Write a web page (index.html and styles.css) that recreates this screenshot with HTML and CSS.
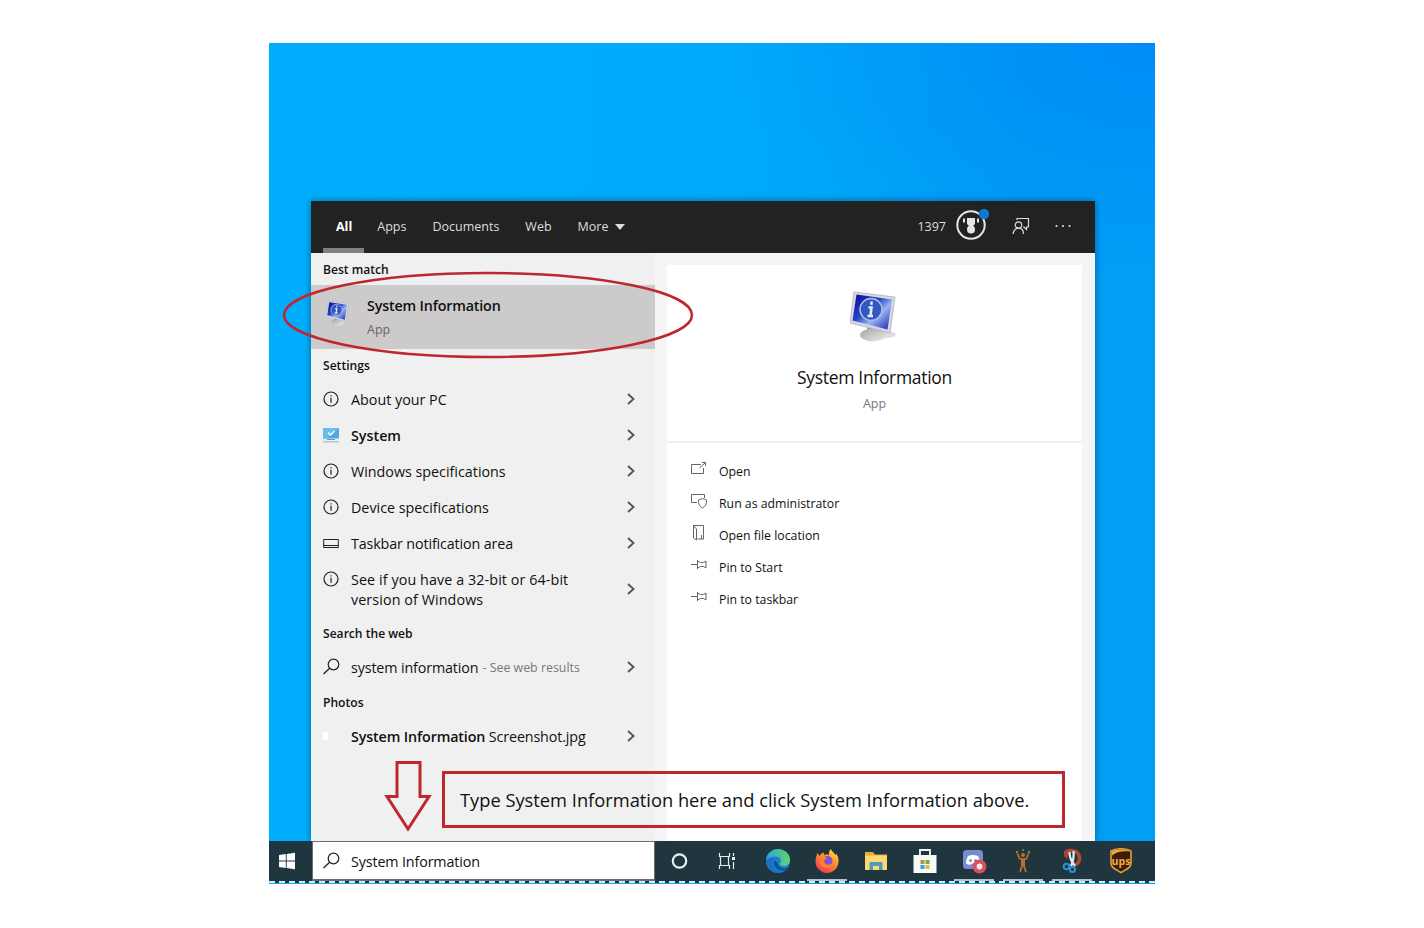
FILE: index.html
```html
<!DOCTYPE html>
<html>
<head>
<meta charset="UTF-8">
<title>System Information</title>
<link rel="stylesheet" href="styles.css">
</head>
<body>
<svg class="defs" width="0" height="0">
	<defs>
		<linearGradient id="screen" x1="0" y1="0" x2="1" y2="1">
			<stop offset="0" stop-color="#0a0a9c"/><stop offset=".4" stop-color="#2444c4"/><stop offset=".62" stop-color="#9ab4f2"/><stop offset="1" stop-color="#1420b0"/>
		</linearGradient>
		<linearGradient id="stand" x1="0" y1="0" x2="1" y2="1">
			<stop offset="0" stop-color="#a4a4a6"/><stop offset="1" stop-color="#ededed"/>
		</linearGradient>
		<linearGradient id="edgeTop" x1="0" y1="0" x2="1" y2="0">
			<stop offset="0" stop-color="#2aa5dc"/><stop offset="1" stop-color="#62d46a"/>
		</linearGradient>
		<linearGradient id="fox" x1=".8" y1="0" x2=".2" y2="1">
			<stop offset="0" stop-color="#ffe04a"/><stop offset=".45" stop-color="#ff8a2c"/><stop offset="1" stop-color="#f0305c"/>
		</linearGradient>
	</defs>
	<symbol id="monitor" viewBox="0 0 48 52">
		<ellipse cx="36" cy="43.500" rx="10" ry="3.500" fill="#cfcfd1" opacity=".7"/>
		<path d="M17 36l13 3v5H18z" fill="#8b8b90"/>
		<ellipse cx="23" cy="44" rx="13" ry="6.500" fill="url(#stand)"/>
		<path d="M4 1l41 5-5 36L0 32z" fill="#d5d7e4" stroke="#aeb0bf" stroke-width=".8"/>
		<path d="M6.500 3.500l35.500 5-4.500 30L2.500 29.500z" fill="url(#screen)"/>
		<circle cx="21" cy="18.500" r="11" fill="#3457bf" stroke="#a9bdec" stroke-width="1.500"/>
		<path d="M21.500 10.500v3.200M18.500 16.500h3l-1 8M17.500 25h5.500" stroke="#e2e9fb" stroke-width="2.600" fill="none"/>
	</symbol>
	<symbol id="info" viewBox="0 0 16 16">
		<circle cx="8" cy="8" r="7" fill="none" stroke="#222" stroke-width="1.200"/>
		<path d="M8 6.700v5M8 4.300v1.300" stroke="#222" stroke-width="1.200"/>
	</symbol>
	<symbol id="arrow" viewBox="0 0 10 14">
		<path d="M2 2l5.500 5L2 12" fill="none" stroke="#555" stroke-width="1.900"/>
	</symbol>
	<symbol id="search" viewBox="0 0 18 18">
		<circle cx="10.500" cy="6.500" r="5.300" fill="none" stroke="#222" stroke-width="1.200"/>
		<path d="M6.700 10.200L.5 16" stroke="#222" stroke-width="1.300"/>
	</symbol>
	<symbol id="pin" viewBox="0 0 18 18">
		<path d="M1 8.500h6M7.500 4v9M7.500 5l3 1.500h3L16 5v7l-2.500-1.500h-3l-3 1.500" fill="none" stroke="#666"/>
	</symbol>
</svg>

<div class="desktop">
	<div class="window">
		<div class="header">
			<div class="tab active"><span>All</span></div>
			<div class="tab"><span>Apps</span></div>
			<div class="tab"><span>Documents</span></div>
			<div class="tab"><span>Web</span></div>
			<div class="tab"><span>More</span><i class="caret"></i></div>
			<div class="tools">
				<span class="points">1397</span>
				<svg class="medal" width="34" height="34" viewBox="0 0 34 34">
					<circle cx="16" cy="18" r="13.700" fill="none" stroke="#e6e6e6" stroke-width="2"/>
					<path d="M12 11h8v6l-2 2h-4l-2-2z" fill="#e6e6e6"/>
					<path d="M9 11.500v4M23 11.500v4" stroke="#e6e6e6" stroke-width="2"/>
					<circle cx="16" cy="22.500" r="4" fill="#e6e6e6"/>
					<circle cx="29" cy="7" r="5.200" fill="#0f78d4"/>
				</svg>
				<svg class="feedback" width="18" height="18" viewBox="0 0 18 18" fill="none" stroke="#ddd" stroke-width="1.200">
					<path d="M5 3V1.500h11.500v8.500h-2v2.500L12 10h-1"/>
					<circle cx="6.500" cy="8" r="3.200"/>
					<path d="M1.200 17c0-3.500 2.300-5.800 5.300-5.800s5 2.300 5 5.800"/>
				</svg>
				<svg width="16" height="4" viewBox="0 0 16 4" fill="#ddd"><circle cx="1.500" cy="2" r="1.100"/><circle cx="8" cy="2" r="1.100"/><circle cx="14.500" cy="2" r="1.100"/></svg>
			</div>
		</div>
		<div class="body">
			<div class="results">
				<h3>Best match</h3>
				<div class="best">
					<svg width="24" height="27"><use href="#monitor"/></svg>
					<div>
						<b class="best-name">System Information</b>
						<p>App</p>
					</div>
				</div>
				<h3>Settings</h3>
				<div class="row"><svg class="icon" width="16" height="16"><use href="#info"/></svg><span class="label">About your PC</span><svg class="arrow"><use href="#arrow"/></svg></div>
				<div class="row">
					<svg class="icon" width="16" height="16" viewBox="0 0 16 16">
						<path d="M0 1h16v10.500H0z" fill="#4fa9dc"/><path d="M0 1h16L4 11.500H0z" fill="#6cbce6"/>
						<path d="M5 5.500l2.500 2.500L11.500 4" fill="none" stroke="#fff" stroke-width="1.300"/>
						<path d="M4 12.500h8" stroke="#4f9fc8"/><path d="M0 14.800h16" stroke="#86b9d4"/>
					</svg>
					<b class="label">System</b><svg class="arrow"><use href="#arrow"/></svg>
				</div>
				<div class="row"><svg class="icon" width="16" height="16"><use href="#info"/></svg><span class="label">Windows specifications</span><svg class="arrow"><use href="#arrow"/></svg></div>
				<div class="row"><svg class="icon" width="16" height="16"><use href="#info"/></svg><span class="label">Device specifications</span><svg class="arrow"><use href="#arrow"/></svg></div>
				<div class="row">
					<svg class="icon" width="16" height="16" viewBox="0 0 16 16"><path d="M.7 4.500h14.600v8H.7zM.7 10.500h14.600" fill="none" stroke="#222"/></svg>
					<span class="label narrow">Taskbar notification area</span><svg class="arrow"><use href="#arrow"/></svg>
				</div>
				<div class="row tall"><svg class="icon" width="16" height="16"><use href="#info"/></svg><span class="label wide">See if you have a 32-bit or 64-bit<br>version of Windows</span><svg class="arrow"><use href="#arrow"/></svg></div>
				<h3>Search the web</h3>
				<div class="row web"><svg class="icon" width="18" height="18"><use href="#search"/></svg><span class="label narrow">system information</span><small>- See web results</small><svg class="arrow"><use href="#arrow"/></svg></div>
				<h3>Photos</h3>
				<div class="row web">
					<svg class="icon" width="16" height="16" viewBox="0 0 16 16"><path d="M0 4h5v8H0z" fill="#fff"/><path d="M7 4.500h6M9 8h6M7 11h7" stroke="#f7f7f7"/></svg>
					<span class="label narrow"><b>System Information</b> Screenshot.jpg</span><svg class="arrow"><use href="#arrow"/></svg>
				</div>
			</div>
			<div class="preview">
				<div class="card">
					<div class="app">
						<svg width="48" height="52"><use href="#monitor"/></svg>
						<h2>System Information</h2>
						<p>App</p>
					</div>
					<div class="actions">
						<div class="action"><svg width="18" height="18" viewBox="0 0 18 18" fill="none" stroke="#666"><path d="M11 4.500H1.500v9h12V8M9.500 8l5.500-5M12 2.500h3.500V6"/></svg><span>Open</span></div>
						<div class="action"><svg width="18" height="18" viewBox="0 0 18 18" fill="none" stroke="#666"><path d="M7 10.500H1.500v-8h13V6M12.500 6.500l4 1.500c.3 4-1 6.500-4 8-3-1.500-4.300-4-4-8z"/></svg><span>Run as administrator</span></div>
						<div class="action"><svg width="18" height="18" viewBox="0 0 18 18" fill="none" stroke="#666"><path d="M3.500 1.500h10V15h-6M3.500 1.500V14l3 2V5L3.500 1.500M11.500 11v4"/></svg><span>Open file location</span></div>
						<div class="action"><svg width="18" height="18"><use href="#pin"/></svg><span>Pin to Start</span></div>
						<div class="action"><svg width="18" height="18"><use href="#pin"/></svg><span>Pin to taskbar</span></div>
					</div>
				</div>
			</div>
		</div>
	</div>

	<div class="taskbar">
		<div class="start">
			<svg width="18" height="18" viewBox="0 0 18 18" fill="#fff"><path d="M1 3l6.800-1v6.500H1zM8.700 1.900L17 .7v7.800H8.700zM1 9.400h6.800V16L1 15zM8.700 9.400H17v7.900l-8.300-1.200z"/></svg>
		</div>
		<div class="searchbox"><svg width="18" height="18"><use href="#search"/></svg><span>System Information</span></div>
		<div class="task"><svg width="18" height="18" viewBox="0 0 18 18"><circle cx="8.500" cy="9" r="6.700" fill="none" stroke="#e6f0f4" stroke-width="2.200"/></svg></div>
		<div class="task">
			<svg class="taskview" width="18" height="18" viewBox="0 0 18 18" fill="none" stroke="#e6edf0" stroke-width="1.200"><path d="M1.500 1v3.500h10V1M1.500 17v-3.500h10V17M2.500 4.500v9M10.500 4.500v9M15.500 1v3M15.500 10v7"/><path d="M14 5h3v3h-3z" fill="#e6edf0" stroke="none"/></svg>
		</div>
		<div class="task">
			<svg width="26" height="26" viewBox="0 0 26 26">
				<circle cx="13" cy="13" r="12" fill="#1580cf"/>
				<path d="M1 12C2 5 7 1 13 1c7 0 12 5 12 11 0 4-3 6-6.500 6-3 0-4.500-1.500-3.500-3 2-3 0-6.500-4-6.500C6.500 8.500 3 10 1 12z" fill="url(#edgeTop)"/>
				<path d="M9 10.500C6 15 8 22 15 24.800 8 26 2.500 21 1.200 15.500 1 12 5 9 9 10.500z" fill="#1b6fc4"/>
				<path d="M9.500 12c-2 5 2 11 8.500 10.500 2-.2 4-1.200 5.500-3C19 21.500 13 19.500 12.500 15z" fill="#104f96"/>
			</svg>
		</div>
		<div class="task open">
			<svg width="26" height="26" viewBox="0 0 26 26">
				<path d="M3.500 5l2 3c1-2 2.500-3 4-3.500L10 7c2-.6 3.500-.6 5 0-.5-2.500.5-5 2-6 .5 2.500 3 3.500 4.500 6 .5-.5.500-1 .5-1.500C24 8 25 11 24.500 14.500 23.700 20.500 19 25 13 25S1.500 20 1.500 14C1.500 10 2.500 7.500 3.500 5z" fill="url(#fox)"/>
				<circle cx="13.500" cy="13" r="5" fill="#8550d8"/>
				<path d="M6 10c3-1.500 5-1 7 .5l-3 2c0 4 4 5.500 8 3-1.500 5-8 6-11 2C5.500 15.500 5 12.500 6 10z" fill="#ff8130"/>
			</svg>
		</div>
		<div class="task">
			<svg width="24" height="22" viewBox="0 0 24 22">
				<path d="M1 2h8l2 2.500h12V19H1z" fill="#e3ae3c"/><path d="M1 5.500h22V20H1z" fill="#fbd872"/>
				<path d="M5.500 20v-6.500c0-1 .5-1.500 1.500-1.500h10c1 0 1.500.5 1.500 1.500V20H15v-4H9v4z" fill="#4e9cc0"/>
			</svg>
		</div>
		<div class="task">
			<svg width="24" height="26" viewBox="0 0 24 26">
				<path d="M7 7V2h10v5" fill="none" stroke="#f4f8f8" stroke-width="1.800"/><path d="M.5 7h23v18H.5z" fill="#f8faf9"/>
				<path d="M7.500 12h4v4h-4z" fill="#c98a3c"/><path d="M12.500 12h4v4h-4z" fill="#7aa93c"/><path d="M7.500 17h4v4h-4z" fill="#3a9fd8"/><path d="M12.500 17h4v4h-4z" fill="#e8ba3c"/>
			</svg>
		</div>
		<div class="task open">
			<svg width="26" height="26" viewBox="0 0 26 26">
				<rect x="2" y="2" width="20" height="19" rx="3.500" fill="#7b8bd2"/>
				<path d="M7 8c3-1.300 7-1.300 10 0 1.500 2.500 2 5 1.800 7.500-1.500 1-2.500 1.300-3.800 1.500l-1-1.300h-4L9 17c-1.300-.2-2.300-.5-3.800-1.500C5 13 5.500 10.500 7 8z" fill="#fff"/><circle cx="9.500" cy="12.500" r="1.500" fill="#7b8bd2"/><circle cx="14.500" cy="12.500" r="1.500" fill="#7b8bd2"/>
				<circle cx="18.500" cy="18.500" r="6.900" fill="#d8515e"/><circle cx="18.500" cy="18.500" r="2.900" fill="#fbe6e8"/>
			</svg>
		</div>
		<div class="task open">
			<svg width="20" height="26" viewBox="0 0 20 26" fill="none" stroke="#b86f2e" stroke-width="1.800">
				<path d="M4.500 5.500l2 5 3.500 1 3.500-1 2-5M9 11v7l-2 6M11 11v7l2 6"/><path d="M10 10.500v8" stroke-width="4"/>
				<circle cx="10" cy="7" r="2" fill="#b86f2e" stroke="none"/><path d="M3.500 3.500l1 1M9.500 2h1M15.500 4.500l1-1" stroke="#dca544"/>
			</svg>
		</div>
		<div class="task open">
			<svg width="24" height="26" viewBox="0 0 24 26">
				<path d="M6 3.500c8-3 14 1 13.500 7.500-.4 3.500-2.500 5.500-5.500 6" fill="none" stroke="#b04a33" stroke-width="3.500"/><path d="M4 2.500l5 1.500-2 7-3-3z" fill="#a84433"/>
				<path d="M9.500 4c0 5 2 10 5.500 14M13.500 3c.5 5-.5 11-2.500 15" fill="none" stroke="#e4e7ea" stroke-width="2.300"/>
				<circle cx="6.500" cy="18.500" r="2.800" fill="none" stroke="#2492d6" stroke-width="2"/><circle cx="12.500" cy="21.500" r="2.600" fill="none" stroke="#2492d6" stroke-width="2"/>
			</svg>
		</div>
		<div class="task">
			<svg width="24" height="26" viewBox="0 0 24 26">
				<path d="M2 3c6-3 14-3 20 0v12c0 5-5 6.500-10 9.500C7 21.500 2 20 2 15z" fill="#3d1c0c" stroke="#e5a233" stroke-width="1.600"/>
				<path d="M3 7.500C7 3.500 14 2.500 21 3.500 15 0 8 1 3 3.500z" fill="#edac38"/>
				<text x="12" y="16.500" class="ups">ups</text>
			</svg>
		</div>
	</div>

	<!-- annotations drawn over the desktop -->
	<svg class="ring" width="412" height="88"><ellipse cx="206" cy="44" rx="204" ry="42"/></svg>
	<svg class="down" width="48" height="72" viewBox="0 0 48 72"><path d="M13 2.500h23v34h9L24 69 3 36.500h10z"/></svg>
	<div class="callout"><span>Type System Information here and click System Information above.</span></div>
</div>
</body>
</html>
```
FILE: styles.css
```css
* {
	box-sizing: border-box;
	margin: 0;
	padding: 0;
}
body {
	background: #fff;
	font-family: "Open Sans", "Noto Sans", sans-serif;
	font-size: 14.3px;
	color: #111;
	padding: 43px 0 0 269px;
}
svg {
	flex: none;
}
.defs {
	position: absolute;
}

.desktop {
	position: relative;
	width: 886px;
	height: 841px;
	padding-top: 158px;
	background:
		radial-gradient(420px 240px at 100% 0, rgba(0, 136, 248, .8), rgba(0, 150, 245, 0)),
		linear-gradient(90deg, #00aefd 0, #00aafb 50%, #009ff3 85%, #009ff5 100%);
}
.window {
	width: 784px;
	height: 640px;
	margin-left: 42px;
	background: #f4f4f4;
	box-shadow: 0 0 7px rgba(0, 50, 90, .6);
}

.header {
	display: flex;
	height: 52px;
	padding-left: 12px;
	background: #222;
	color: #dedede;
	font-size: 12.5px;
}
.tab {
	display: flex;
	align-items: center;
	padding: 0 13px 1px;
	white-space: nowrap;
}
.tab.active {
	padding: 4px 12px 0 13px;
	border-bottom: 5px solid #808080;
	color: #fff;
	font-weight: 700;
}
.caret {
	margin-left: 7px;
	border: 5px solid transparent;
	border-top: 6px solid #dedede;
	border-bottom: 0;
}
.tools {
	display: flex;
	align-items: center;
	margin-left: auto;
	padding: 0 24px 2px 0;
}
.medal {
	margin: -4px 0 0 9px;
}
.feedback {
	margin: 0 25px 0 23px;
}

.body {
	display: flex;
	height: 588px;
}
.results {
	width: 344px;
	background: #f0f0f0;
}
h3 {
	height: 32px;
	padding-left: 12px;
	line-height: 34px;
	font-size: 12.1px;
	font-weight: 600;
}
.best {
	display: flex;
	height: 64px;
	padding: 10px 15px;
	gap: 17px;
	background: #cccaca;
}
.best svg {
	margin-top: 5px;
}
.best-name {
	display: block;
	line-height: 22px;
	letter-spacing: -.17px;
}
.best p {
	margin-top: 4px;
	line-height: 18px;
	font-size: 12.5px;
	color: #666;
}
b {
	font-weight: 600;
}

.row {
	display: flex;
	align-items: center;
	height: 36px;
	padding: 0 19px 0 12px;
	line-height: 20px;
	white-space: nowrap;
}
.row .icon {
	margin: -1px 12px 0 0;
}
.row .icon[width="18"] {
	margin-right: 10px;
}
.label {
	padding-top: 1px;
}
.narrow {
	letter-spacing: -.13px;
}
.wide {
	letter-spacing: .1px;
}
.row small {
	margin-left: 4px;
	padding-top: 2px;
	font-size: 12.4px;
	color: #777;
}
.row .arrow {
	width: 10px;
	height: 14px;
	margin-left: auto;
}
.row.tall {
	height: 56px;
}
.tall .label {
	padding-top: 2px;
}
.row.tall .icon {
	align-self: flex-start;
	margin-top: 10px;
}
.row.web {
	height: 37px;
	padding-bottom: 1px;
}

.preview {
	width: 440px;
	padding: 12px 13px 0 12px;
	background: #f5f5f5;
}
.card {
	height: 576px;
	background: #fff;
}
.app {
	display: flex;
	flex-direction: column;
	align-items: center;
	height: 178px;
	padding-top: 26px;
	border-bottom: 2px solid #f0f0f0;
}
.app svg {
	margin-right: 2px;
}
.app h2 {
	margin-top: 21px;
	line-height: 26px;
	font-size: 17.5px;
	font-weight: 400;
	letter-spacing: -.32px;
}
.app p {
	margin-top: 5px;
	line-height: 18px;
	font-size: 12.5px;
	color: #777;
}
.actions {
	padding: 12px 23px;
}
.action {
	display: flex;
	align-items: center;
	height: 32px;
	gap: 11px;
	font-size: 12.3px;
}
.action svg {
	margin-top: -4px;
}

.taskbar {
	display: flex;
	height: 42px;
	background: #20363f;
	border-bottom: 2px dashed #dbe6ef;
}
.start {
	display: flex;
	align-items: center;
	justify-content: center;
	width: 36px;
	margin-right: 7px;
}
.searchbox {
	display: flex;
	align-items: center;
	width: 343px;
	padding: 1px 0 0 10px;
	gap: 10px;
	background: #fff;
	border: 1px solid #6b6f72;
	border-bottom-width: 2px;
	letter-spacing: -.13px;
}
.task {
	display: flex;
	align-items: center;
	justify-content: center;
	width: 49px;
	padding: 0 4px;
}
.taskview {
	margin-right: 3px;
}
.open {
	background: linear-gradient(#b4c2ca, #b4c2ca) center bottom / 40px 2px no-repeat;
}
.ups {
	fill: #efb03c;
	font-size: 10.5px;
	font-weight: 700;
	text-anchor: middle;
}

.ring, .down {
	position: absolute;
	fill: none;
	stroke: #bf2730;
	stroke-width: 2.5px;
}
.ring {
	left: 13px;
	top: 228px;
}
.down {
	left: 115px;
	top: 717px;
	stroke-width: 3px;
}
.callout {
	position: absolute;
	left: 173px;
	top: 728px;
	width: 623px;
	height: 57px;
	padding-left: 15px;
	border: 3px solid #bf2730;
	line-height: 51px;
	font-size: 18.3px;
	white-space: nowrap;
}
```
